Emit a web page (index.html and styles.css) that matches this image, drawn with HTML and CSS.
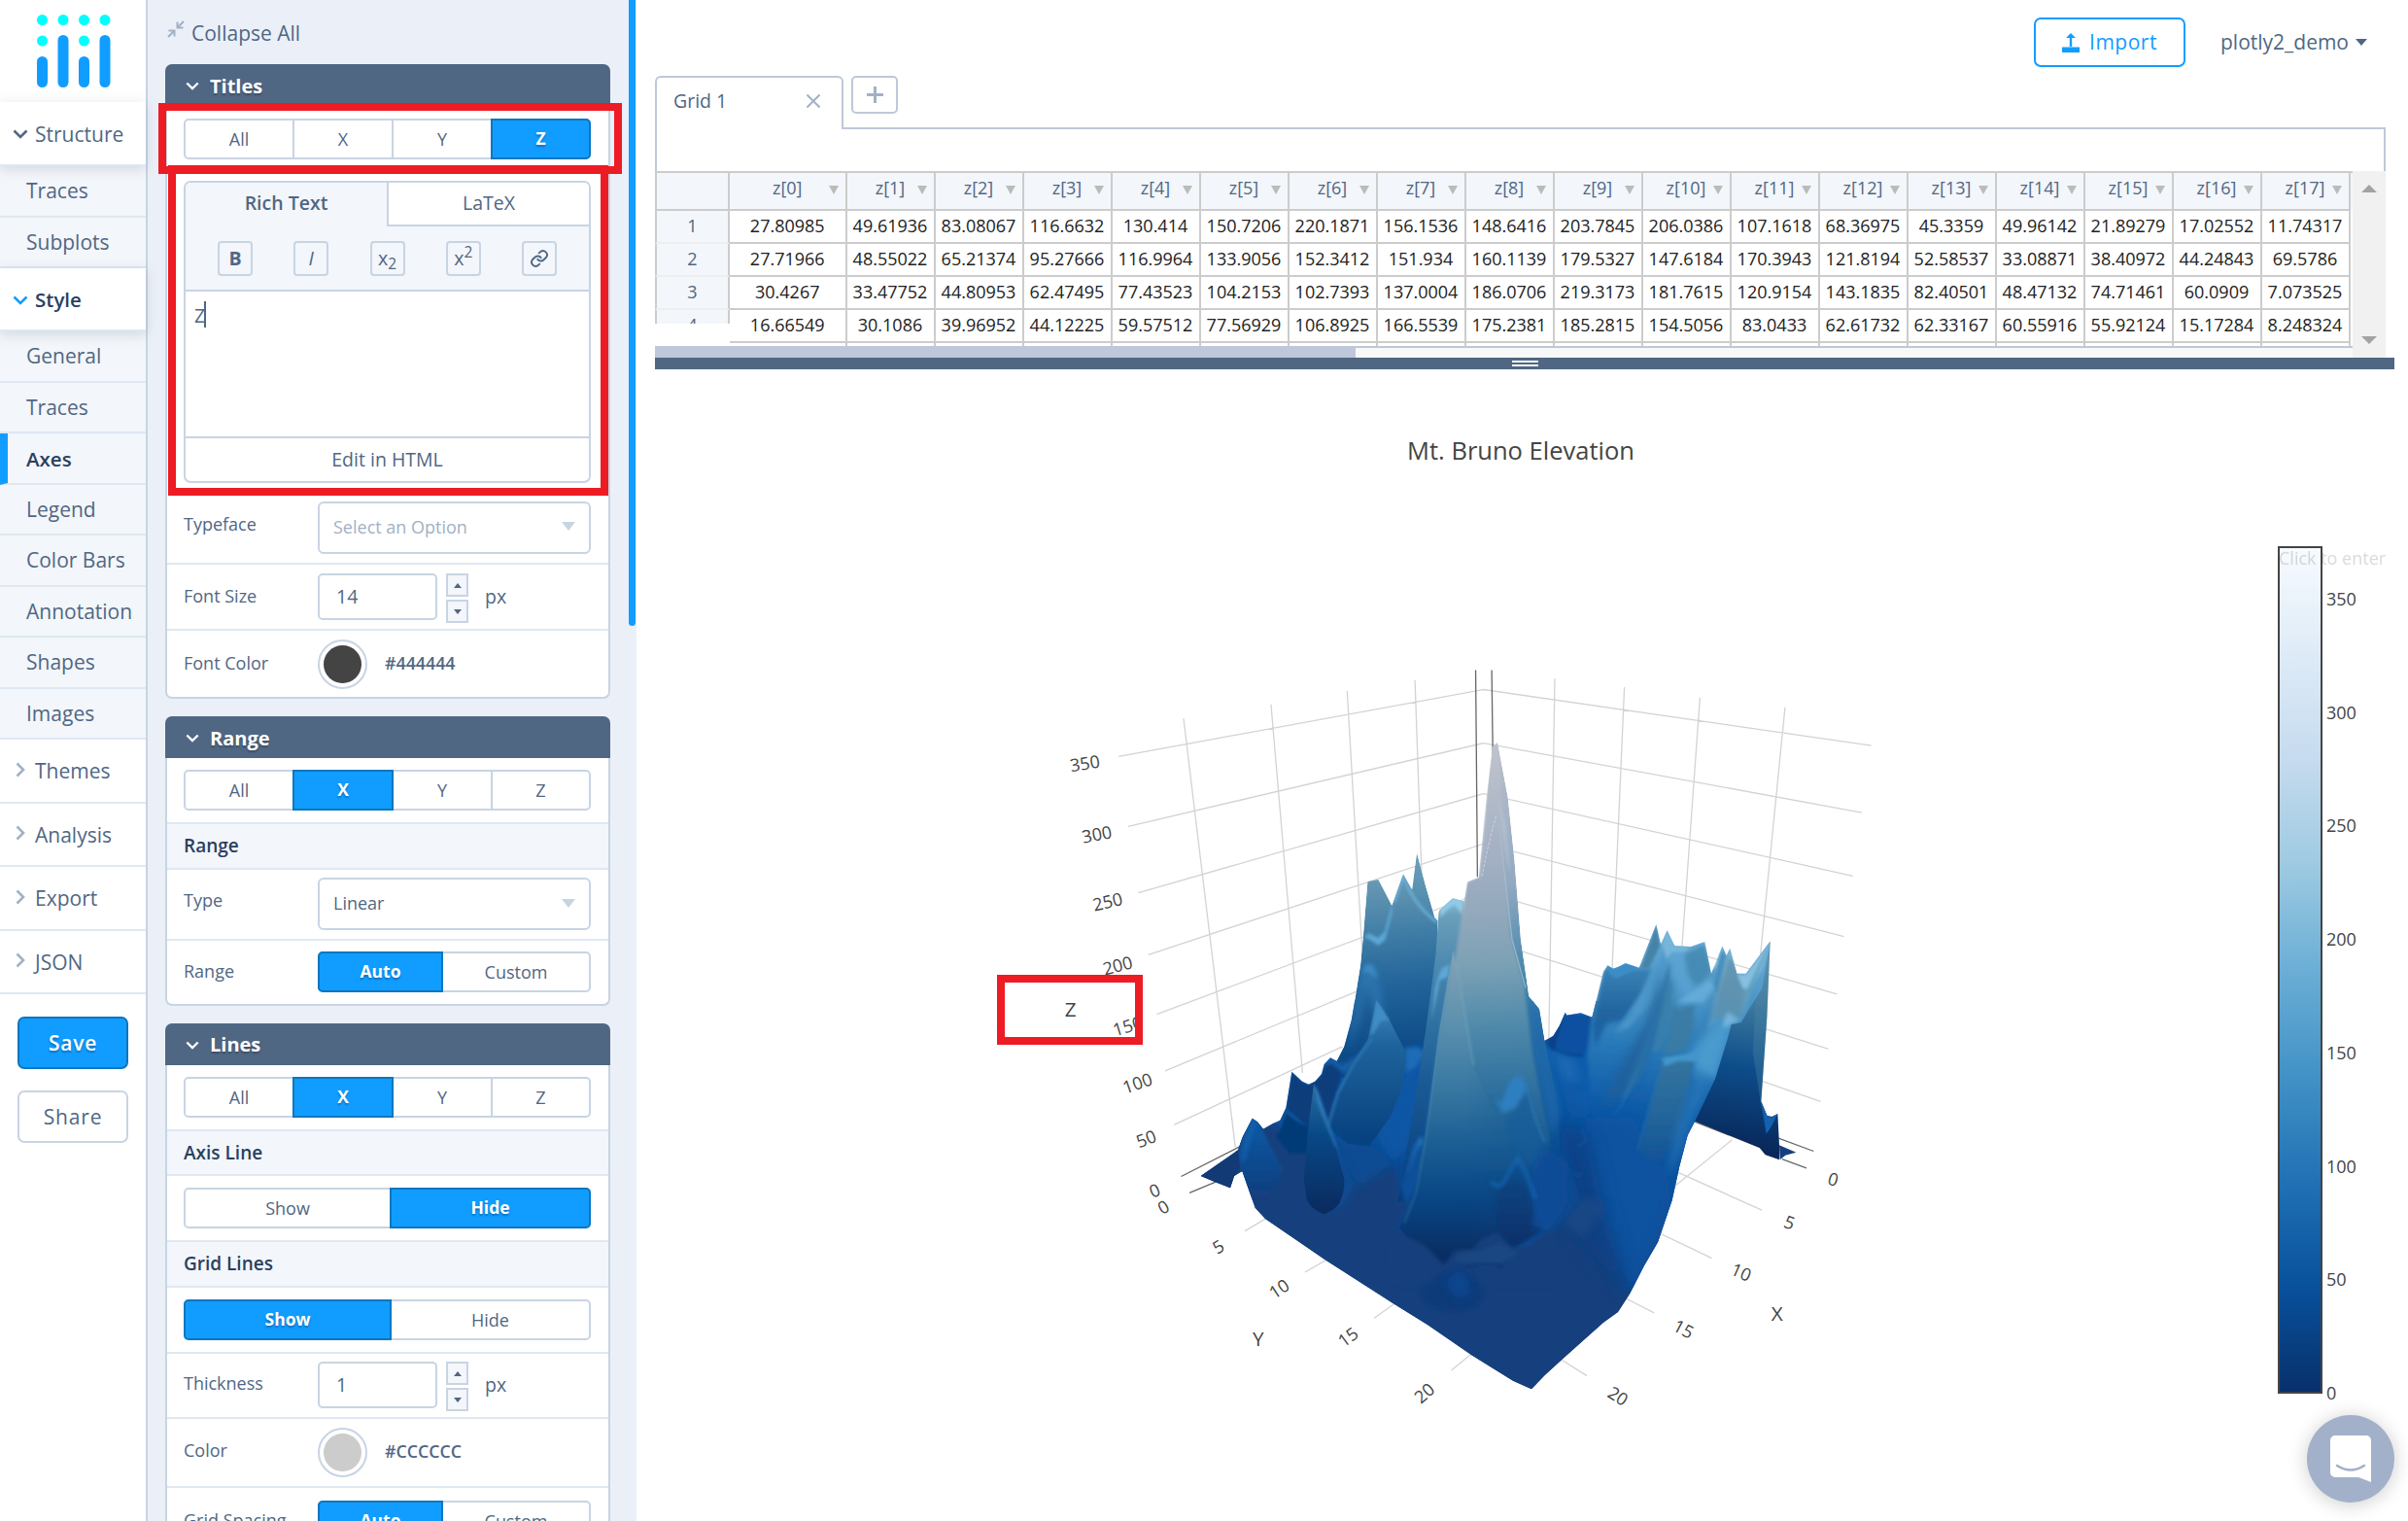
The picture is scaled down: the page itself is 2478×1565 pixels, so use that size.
FILE: index.html
```html
<!DOCTYPE html>
<html lang="en">
<head>
<meta charset="utf-8">
<title>Chart Studio</title>
<link rel="stylesheet" href="styles.css">
</head>
<body>
<div class="app">
  <nav class="sidebar">
    <div class="logo">
      <svg width="76" height="76" viewBox="0 0 76 76">
        <g fill="#0ff"><circle cx="5.5" cy="5.5" r="5.5"/><circle cx="27" cy="5.5" r="5.5"/><circle cx="48.500" cy="5.500" r="5.500"/><circle cx="70" cy="5.500" r="5.500"/><circle cx="5.500" cy="27" r="5.500"/><circle cx="48.500" cy="27" r="5.500"/></g>
        <g fill="#119dff"><rect x="0" y="43" width="11" height="32" rx="5.500"/><rect x="21.500" y="21" width="11" height="54" rx="5.500"/><rect x="43" y="43" width="11" height="32" rx="5.500"/><rect x="64.500" y="21" width="11" height="54" rx="5.500"/></g>
      </svg>
    </div>
    <div class="group open"><svg class="chev" viewBox="0 0 16 10"><path d="M1.500 1.500L8 8l6.500-6.500"/></svg>Structure</div>
    <div class="item">Traces</div>
    <div class="item">Subplots</div>
    <div class="group open active"><svg class="chev" viewBox="0 0 16 10"><path d="M1.500 1.500L8 8l6.500-6.500"/></svg>Style</div>
    <div class="item">General</div>
    <div class="item">Traces</div>
    <div class="item selected">Axes</div>
    <div class="item">Legend</div>
    <div class="item">Color Bars</div>
    <div class="item">Annotation</div>
    <div class="item">Shapes</div>
    <div class="item">Images</div>
    <div class="group"><svg class="chev side" viewBox="0 0 10 16"><path d="M1.500 1.500L8 8l-6.500 6.500"/></svg>Themes</div>
    <div class="group"><svg class="chev side" viewBox="0 0 10 16"><path d="M1.500 1.500L8 8l-6.500 6.500"/></svg>Analysis</div>
    <div class="group"><svg class="chev side" viewBox="0 0 10 16"><path d="M1.500 1.500L8 8l-6.500 6.500"/></svg>Export</div>
    <div class="group"><svg class="chev side" viewBox="0 0 10 16"><path d="M1.500 1.500L8 8l-6.500 6.500"/></svg>JSON</div>
    <button class="btn primary">Save</button>
    <button class="btn">Share</button>
  </nav>

  <aside class="panel">
    <div class="collapse">
      <svg width="18" height="18" viewBox="0 0 18 18" fill="none" stroke="#a2b1c6" stroke-width="2"><path d="M17 1l-6 6M10.500 1.500v6h6M1 17l6-6M1.500 10.500h6v6"/></svg>
      Collapse All
    </div>

    <section class="fold titles">
      <h2><svg class="chev" viewBox="0 0 16 10"><path d="M1.500 1.500L8 8l6.500-6.500"/></svg>Titles</h2>
      <div class="row seg-row plain"><div class="seg axes"><span>All</span><span>X</span><span>Y</span><span class="on">Z</span></div></div>
      <div class="editor-row">
        <div class="editor">
          <div class="tabs"><span class="current">Rich Text</span><span>LaTeX</span></div>
          <div class="tools">
            <span><b>B</b></span><span><i>I</i></span><span>x<sub>2</sub></span><span>x<sup>2</sup></span>
            <span><svg width="20" height="20" viewBox="0 0 24 24" fill="none" stroke="#506784" stroke-width="2.300" stroke-linecap="round"><path d="M10 13a5 5 0 0 0 7.500.5l3-3a5 5 0 0 0-7-7l-1.800 1.700M14 11a5 5 0 0 0-7.500-.5l-3 3a5 5 0 0 0 7 7l1.800-1.700"/></svg></span>
          </div>
          <div class="text">Z<span class="caret"></span></div>
          <div class="edit">Edit in HTML</div>
        </div>
      </div>
      <div class="row h75"><label>Typeface</label><div class="select hint">Select an Option<i></i></div></div>
      <div class="row h68"><label>Font Size</label><div class="num">14</div><div class="spin"><i class="up"></i><i class="down"></i></div><span class="unit">px</span></div>
      <div class="row h68"><label>Font Color</label><div class="swatch"><i class="dark"></i></div><span class="hex">#444444</span></div>
    </section>

    <section class="fold">
      <h2><svg class="chev" viewBox="0 0 16 10"><path d="M1.500 1.500L8 8l6.500-6.500"/></svg>Range</h2>
      <div class="row seg-row"><div class="seg axes"><span>All</span><span class="on">X</span><span>Y</span><span>Z</span></div></div>
      <div class="sub">Range</div>
      <div class="row h73"><label>Type</label><div class="select">Linear<i></i></div></div>
      <div class="row h65"><label>Range</label><div class="seg auto"><span class="on">Auto</span><span>Custom</span></div></div>
    </section>

    <section class="fold">
      <h2><svg class="chev" viewBox="0 0 16 10"><path d="M1.500 1.500L8 8l6.500-6.500"/></svg>Lines</h2>
      <div class="row seg-row"><div class="seg axes"><span>All</span><span class="on">X</span><span>Y</span><span>Z</span></div></div>
      <div class="sub">Axis Line</div>
      <div class="row seg-row"><div class="seg half"><span>Show</span><span class="on">Hide</span></div></div>
      <div class="sub">Grid Lines</div>
      <div class="row seg-row"><div class="seg half"><span class="on">Show</span><span>Hide</span></div></div>
      <div class="row h67"><label>Thickness</label><div class="num">1</div><div class="spin"><i class="up"></i><i class="down"></i></div><span class="unit">px</span></div>
      <div class="row h71"><label>Color</label><div class="swatch"><i class="light"></i></div><span class="hex">#CCCCCC</span></div>
      <div class="row h68"><label>Grid Spacing</label><div class="seg auto"><span class="on">Auto</span><span>Custom</span></div></div>
    </section>
    <div class="thumb"></div>
  </aside>

  <main class="work">
    <header class="top">
      <button class="import"><svg width="18" height="20" viewBox="0 0 18 20"><path fill="#119dff" d="M0 14.500h18V20H0zM7.800 14V5H4l5-5 5 5h-3.800v9z"/></svg>Import</button>
      <div class="user">plotly2_demo<i></i></div>
    </header>
    <div class="gridtabs">
      <div class="gtab"><span>Grid 1</span><svg width="16" height="16" viewBox="0 0 16 16" stroke="#a2b1c6" stroke-width="2"><path d="M1.500 1.500l13 13M14.500 1.500l-13 13"/></svg></div>
      <div class="line"><div class="plus"><svg width="17" height="17" viewBox="0 0 17 17" stroke="#a2b1c6" stroke-width="3"><path d="M8.500 0v17M0 8.500h17"/></svg></div></div>
    </div>
    <div class="formula"></div>
    <div class="sheet">
      <div class="rownums"><b></b><b>1</b><b>2</b><b>3</b><b>4</b></div>
      <div class="cells">
        <div class="r head"><span>z[0]</span><span>z[1]</span><span>z[2]</span><span>z[3]</span><span>z[4]</span><span>z[5]</span><span>z[6]</span><span>z[7]</span><span>z[8]</span><span>z[9]</span><span>z[10]</span><span>z[11]</span><span>z[12]</span><span>z[13]</span><span>z[14]</span><span>z[15]</span><span>z[16]</span><span>z[17]</span></div>
        <div class="r"><span>27.80985</span><span>49.61936</span><span>83.08067</span><span>116.6632</span><span>130.414</span><span>150.7206</span><span>220.1871</span><span>156.1536</span><span>148.6416</span><span>203.7845</span><span>206.0386</span><span>107.1618</span><span>68.36975</span><span>45.3359</span><span>49.96142</span><span>21.89279</span><span>17.02552</span><span>11.74317</span></div>
        <div class="r"><span>27.71966</span><span>48.55022</span><span>65.21374</span><span>95.27666</span><span>116.9964</span><span>133.9056</span><span>152.3412</span><span>151.934</span><span>160.1139</span><span>179.5327</span><span>147.6184</span><span>170.3943</span><span>121.8194</span><span>52.58537</span><span>33.08871</span><span>38.40972</span><span>44.24843</span><span>69.5786</span></div>
        <div class="r"><span>30.4267</span><span>33.47752</span><span>44.80953</span><span>62.47495</span><span>77.43523</span><span>104.2153</span><span>102.7393</span><span>137.0004</span><span>186.0706</span><span>219.3173</span><span>181.7615</span><span>120.9154</span><span>143.1835</span><span>82.40501</span><span>48.47132</span><span>74.71461</span><span>60.0909</span><span>7.073525</span></div>
        <div class="r"><span>16.66549</span><span>30.1086</span><span>39.96952</span><span>44.12225</span><span>59.57512</span><span>77.56929</span><span>106.8925</span><span>166.5539</span><span>175.2381</span><span>185.2815</span><span>154.5056</span><span>83.0433</span><span>62.61732</span><span>62.33167</span><span>60.55916</span><span>55.92124</span><span>15.17284</span><span>8.248324</span></div>
        <div class="r"><span></span><span></span><span></span><span></span><span></span><span></span><span></span><span></span><span></span><span></span><span></span><span></span><span></span><span></span><span></span><span></span><span></span><span></span></div>
      </div>
      <div class="vscroll"><i class="up"></i><i class="down"></i></div>
      <div class="hscroll"><i></i></div>
    </div>
    <div class="splitter"><i></i><i></i></div>

    <div class="plot">
      <div class="title">Mt. Bruno Elevation</div>
      <svg class="scene" width="960" height="820" viewBox="-600 -570 2880 2460">
        <defs>
          <filter id="s" x="-40%" y="-40%" width="180%" height="180%"><feGaussianBlur stdDeviation="4"/></filter>
          <filter id="n" x="-50%" y="-50%" width="200%" height="200%"><feGaussianBlur stdDeviation="7"/></filter>
          <filter id="m" x="-60%" y="-60%" width="220%" height="220%"><feGaussianBlur stdDeviation="13"/></filter>
          <filter id="l" x="-60%" y="-60%" width="220%" height="220%"><feGaussianBlur stdDeviation="28"/></filter>
          <linearGradient id="gFloor" gradientUnits="userSpaceOnUse" x1="0" y1="560" x2="0" y2="1300"><stop offset="0" stop-color="#1766b2"/><stop offset=".35" stop-color="#0b56a4"/><stop offset=".65" stop-color="#0a4a93"/><stop offset="1" stop-color="#17407d"/></linearGradient>
          <linearGradient id="gA" gradientUnits="userSpaceOnUse" x1="640" y1="160" x2="690" y2="700"><stop offset="0" stop-color="#6b9ab4"/><stop offset=".33" stop-color="#3f7da6"/><stop offset=".62" stop-color="#22649a"/><stop offset="1" stop-color="#0c4a87"/></linearGradient>
          <linearGradient id="gR" gradientUnits="userSpaceOnUse" x1="0" y1="82" x2="0" y2="300"><stop offset="0" stop-color="#6fa2bb"/><stop offset="1" stop-color="#4583a8"/></linearGradient>
          <linearGradient id="gB" gradientUnits="userSpaceOnUse" x1="0" y1="220" x2="0" y2="1150"><stop offset="0" stop-color="#8cc4e0"/><stop offset=".06" stop-color="#6b9fbb"/><stop offset=".3" stop-color="#3f7faa"/><stop offset=".6" stop-color="#1a5c97"/><stop offset="1" stop-color="#083c7b"/></linearGradient>
          <linearGradient id="gC" gradientUnits="userSpaceOnUse" x1="930" y1="-258" x2="1000" y2="1340"><stop offset="0" stop-color="#c0c5cd"/><stop offset=".2" stop-color="#a6b2c4"/><stop offset=".33" stop-color="#93a8bc"/><stop offset=".43" stop-color="#7ba1b5"/><stop offset=".55" stop-color="#4f89aa"/><stop offset=".68" stop-color="#2c6e9e"/><stop offset=".8" stop-color="#155790"/><stop offset=".9" stop-color="#074280"/><stop offset="1" stop-color="#0a2c60"/></linearGradient>
          <linearGradient id="gCs" gradientUnits="userSpaceOnUse" x1="0" y1="-258" x2="0" y2="980"><stop offset="0" stop-color="#b9c0cc"/><stop offset=".35" stop-color="#93a9c1"/><stop offset=".55" stop-color="#4d8cb0"/><stop offset=".75" stop-color="#286da2"/><stop offset="1" stop-color="#0a4e94"/></linearGradient>
          <linearGradient id="gD" gradientUnits="userSpaceOnUse" x1="0" y1="380" x2="0" y2="1340"><stop offset="0" stop-color="#87a5b6"/><stop offset=".25" stop-color="#5a8fae"/><stop offset=".45" stop-color="#3777a1"/><stop offset=".62" stop-color="#1c5f95"/><stop offset=".8" stop-color="#084685"/><stop offset="1" stop-color="#0a2c60"/></linearGradient>
          <linearGradient id="gFade" gradientUnits="userSpaceOnUse" x1="925" y1="0" x2="1040" y2="0"><stop offset="0" stop-color="#fff"/><stop offset="1" stop-color="#000"/></linearGradient>
          <mask id="fade" maskUnits="userSpaceOnUse" x="600" y="300" width="600" height="1200"><path fill="url(#gFade)" d="M600 300h600v1200H600z"/></mask>
          <linearGradient id="gL" gradientUnits="userSpaceOnUse" x1="0" y1="540" x2="0" y2="990"><stop offset="0" stop-color="#3f86ba"/><stop offset=".3" stop-color="#1f639c"/><stop offset="1" stop-color="#053f7d"/></linearGradient>
          <linearGradient id="gS" gradientUnits="userSpaceOnUse" x1="0" y1="790" x2="0" y2="1200"><stop offset="0" stop-color="#2a6ea2"/><stop offset=".4" stop-color="#084886"/><stop offset="1" stop-color="#0a2a5e"/></linearGradient>
          <linearGradient id="gT" gradientUnits="userSpaceOnUse" x1="0" y1="900" x2="0" y2="1150"><stop offset="0" stop-color="#0c5aa6"/><stop offset="1" stop-color="#123d7c"/></linearGradient>
          <linearGradient id="gW" gradientUnits="userSpaceOnUse" x1="1840" y1="380" x2="1760" y2="990"><stop offset="0" stop-color="#6f9fb8"/><stop offset=".3" stop-color="#3a769d"/><stop offset=".6" stop-color="#0d4d8a"/><stop offset="1" stop-color="#08285b"/></linearGradient>
          <linearGradient id="gE" gradientUnits="userSpaceOnUse" x1="1560" y1="300" x2="1440" y2="1240"><stop offset="0" stop-color="#6fb0da"/><stop offset=".22" stop-color="#4c96c6"/><stop offset=".42" stop-color="#2878b8"/><stop offset=".62" stop-color="#0d5aa8"/><stop offset="1" stop-color="#0a4a92"/></linearGradient>
          <linearGradient id="gEs" gradientUnits="userSpaceOnUse" x1="0" y1="430" x2="0" y2="720"><stop offset="0" stop-color="#3a83b6"/><stop offset=".5" stop-color="#22659f"/><stop offset="1" stop-color="#1260ab"/></linearGradient>
          <linearGradient id="gP" gradientUnits="userSpaceOnUse" x1="0" y1="700" x2="0" y2="1050"><stop offset="0" stop-color="#36779f"/><stop offset=".6" stop-color="#22649a"/><stop offset="1" stop-color="#0e5197"/></linearGradient>
          <linearGradient id="gQ" gradientUnits="userSpaceOnUse" x1="1760" y1="370" x2="1690" y2="640"><stop offset="0" stop-color="#83b9d8"/><stop offset=".4" stop-color="#6c9fbb"/><stop offset="1" stop-color="#4c93c3"/></linearGradient>
          <linearGradient id="gK" gradientUnits="userSpaceOnUse" x1="0" y1="1030" x2="0" y2="1290"><stop offset="0" stop-color="#0f569e"/><stop offset=".3" stop-color="#07437f"/><stop offset="1" stop-color="#08306a"/></linearGradient>
          <clipPath id="land"><path d="M107 1080L222 1000 236 960 266 902 282 913 300 935 330 918 352 908 370 870 388 758 420 788 440 797 460 788 480 765 488 735 507 715 527 725 550 680 572 600 586 520 600 430 608 340 622 172Q640 162 655 165L665 180 697 245 732 148 760 195 774 82 800 180 830 285 845 258Q865 238 885 222L920 232 930 172 965 158 988-80 1008-245 1023-258 1055-90 1075 100 1095 350 1120 525 1152 565 1168 663 1195 648 1215 615 1232 575 1237 584 1280 577 1315 590 1350 450 1363 430 1380 440 1400 433 1418 423 1460 437 1513 303 1527 365 1547 322 1570 370 1620 372 1663 357 1683 455 1717 370 1730 400 1741 377 1762 455 1790 455 1865 355 1840 500 1775 607 1745 612 1735 650 1695 780 1632 912 1610 955 1585 1050 1562 1155 1518 1285 1475 1358 1432 1443 1395 1500 1350 1532 1224 1645 1169 1695 1128 1738 1071 1712 943 1633 808 1540 704 1475 490 1338 306 1212 275 1178 235 1065 210 1080 198 1117 150 1098z"/></clipPath>
        </defs>

        <g class="gridlines" transform="matrix(1.8367 0 0 1.5306 -600 -570)">
          <path d="M247 232L860 97 1512 210M263 373L860 205 1496 345M280 507L860 307 1481 473M297 632L860 408 1466 595M311 752L860 505 1454 711M325 866L860 600 1440 822M340 975L623 817M1300 875L1427 928M356 155L443 1020M503 127L556 870M631 100L657 640M745 78L757 500M980 75L970 800M1097 92L1075 700M1224 113L1190 680M1367 133L1320 700M1278 1005L1170 1110M1180 1067L1328 1147M1145 1187L1244 1244M1090 1319L1147 1354M980 1440L1034 1481M500 1160L459 1189M604 1242L560 1272M717 1330L676 1365M847 1430L806 1470"/>
          <path class="axis" d="M847 58L850 475M874 58L876 240M352 1079L450 1019M366 1112L410 1090M1210 966L1325 1020M1345 997L1415 1028M1362 1044L1403 1062"/>
        </g>

        <!-- far wall -->
        <path fill="url(#gW)" d="M1740 600L1775 590 1865 355 1855 590 1837 850 1855 893 1870 897 1888 888 1893 985 1893 1030 1850 1015 1832 993 1635 912 1600 900z"/>
        <path fill="#4d86a4" opacity=".35" d="M1865 355L1855 590 1837 850 1850 950 1812 700 1822 480z"/>
        <path fill="#1262b0" d="M1837 850L1855 893 1870 900 1888 888 1870 925 1853 950z"/>
        <path fill="#173f7d" d="M1893 985L1945 1007 1912 1016 1895 1030z"/>

        <g clip-path="url(#land)">
          <path fill="url(#gFloor)" d="M90 540H1900V1760H90z"/>
          <path fill="#17407d" filter="url(#m)" d="M90 1000L300 900 420 960 520 1130 700 1040 760 1250 900 1340 1150 1260 1290 1100 1330 1220 1380 1330 1430 1430 1400 1560 1120 1780 90 1250z"/>
          <!-- valley -->
          <path fill="#0e5bab" filter="url(#l)" d="M1170 650L1330 590 1420 700 1300 900 1250 900z"/>
          <path fill="#1a68b4" filter="url(#m)" d="M1190 700L1260 720 1275 790 1230 780z"/>
          <path fill="#08418a" filter="url(#s)" d="M1165 665L1195 645 1235 575 1232 600 1210 680 1190 690z"/>
          <path fill="#0b50a0" filter="url(#s)" d="M1232 575L1315 588 1330 640 1305 695 1275 712 1225 695 1200 680z"/>
          <path fill="none" stroke="#083f87" stroke-width="5" filter="url(#s)" d="M1185 680Q1240 712 1290 708"/>

          <!-- right range -->
          <path fill="url(#gE)" filter="url(#n)" d="M1300 700L1315 590 1350 440 1365 415 1460 427 1513 285 1547 300 1570 355 1663 340 1690 445 1717 350 1741 360 1762 445 1865 335 1890 600 1755 622 1705 790 1642 922 1620 965 1572 1165 1528 1295 1450 1450 1400 1350 1350 1150 1320 950z"/>
          <path fill="#0a52a0" filter="url(#l)" d="M1290 900L1440 900 1550 1090 1560 1200 1440 1450 1330 1200z"/>
          <path fill="#0a3f84" opacity=".8" filter="url(#l)" d="M1230 900L1300 960 1350 1180 1430 1440 1300 1300 1200 1150z"/>
          <path fill="url(#gEs)" filter="url(#n)" d="M1315 620L1350 450 1362 435 1390 465 1440 440 1460 442 1500 440 1460 530 1410 600 1360 610 1325 680z"/>
          <path fill="#3b8cc6" filter="url(#s)" d="M1362 425L1385 440 1418 420 1462 437 1440 446 1410 455 1385 468 1370 455z"/>
          <path fill="#4583a8" filter="url(#s)" d="M1466 437L1513 303 1525 370 1490 440z"/>
          <path fill="#4d98cb" opacity=".85" filter="url(#n)" d="M1480 500L1540 380 1550 410 1500 540 1430 620 1385 640z"/>
          <path fill="#205f98" opacity=".7" filter="url(#m)" d="M1340 870L1400 740 1480 610 1510 510 1530 440 1530 540 1480 700 1430 820z"/>
          <path fill="#2b6ea3" opacity=".75" filter="url(#n)" d="M1400 850L1450 730 1510 570 1550 430 1560 420 1550 520 1520 640 1460 790z"/>
          <path fill="#5ba3d3" opacity=".9" filter="url(#m)" d="M1550 390L1590 375 1600 450 1640 520 1610 550 1585 490z"/>
          <path fill="#4386ae" opacity=".8" filter="url(#n)" d="M1600 395L1663 365 1685 450 1655 480 1630 490 1610 450z"/>
          <path fill="#77b5da" filter="url(#s)" d="M1530 360L1547 318 1572 370 1620 372 1600 388 1560 390 1545 410z"/>
          <path fill="#3a7fa8" opacity=".8" filter="url(#n)" d="M1500 700L1548 480 1565 475 1565 560 1530 690z"/>
          <path fill="#68aedb" opacity=".85" filter="url(#n)" d="M1575 545L1620 515 1675 475 1700 490 1660 545z"/>
          <path fill="#3a7ba4" opacity=".9" filter="url(#n)" d="M1535 708L1565 548 1580 565 1630 550 1630 620 1605 695z"/>
          <path fill="#347cb3" opacity=".7" filter="url(#m)" d="M1640 690L1680 570 1695 520 1700 560 1670 670z"/>
          <path fill="url(#gQ)" filter="url(#n)" d="M1670 630L1700 500 1741 370 1765 460 1800 490 1775 605 1730 590z"/>
          <path fill="#5b8fac" opacity=".7" filter="url(#s)" d="M1690 590L1738 405 1750 420 1785 500 1770 590z"/>
          <path fill="#3f86b5" opacity=".7" filter="url(#s)" d="M1690 490L1715 385 1728 400 1700 520z"/>
          <path fill="#86bfdf" filter="url(#s)" d="M1762 455L1790 458 1865 355 1840 440 1800 505 1780 500z"/>
          <path fill="#5f9fbe" opacity=".85" filter="url(#s)" d="M1865 355L1775 607 1795 500z"/>
          <path fill="#4a9acd" filter="url(#m)" d="M1620 700L1690 610 1740 590 1745 620 1700 780 1640 780 1630 740z"/>
          <path fill="#7cb9de" opacity=".85" filter="url(#n)" d="M1720 600L1735 572 1770 600 1745 612 1720 625z"/>
          <path fill="url(#gP)" filter="url(#n)" d="M1535 718L1600 715 1630 725 1590 930 1525 1045 1500 1030 1455 1000z"/>
          <path fill="#4395cb" filter="url(#s)" d="M1530 716L1610 702 1650 690 1640 725 1580 726 1538 742z"/>
          <path fill="#2a78b9" opacity=".7" filter="url(#m)" d="M1640 750L1690 770 1630 900 1590 1000 1545 1090 1570 950z"/>
          <g fill="none" stroke="#2a79bf" stroke-width="5" opacity=".45" filter="url(#s)"><path d="M1365 590Q1400 620 1440 575M1370 700L1400 680M1380 890Q1420 860 1460 740M1455 1000L1535 720M1400 870L1470 720 1530 540"/></g>
          <path fill="none" stroke="#15579f" stroke-width="6" opacity=".7" filter="url(#s)" d="M1255 805L1280 812M1250 850L1275 870M1280 930L1298 968 1270 990M1255 1072Q1270 1086 1288 1070"/>
          <path fill="#1e4a86" opacity=".8" filter="url(#m)" d="M1290 1140L1260 1170 1210 1220 1290 1270 1360 1170z"/>

          <!-- left rear massif -->
          <path fill="url(#gR)" d="M755 215L774 82 800 180 832 290 800 320z"/>
          <path fill="url(#gA)" d="M510 760L550 680 572 600 600 430 608 350 622 172 655 165 697 245 732 148 780 235 838 292 835 500 805 640 790 700 700 760 600 800z"/>
          <path fill="#5ba7d6" filter="url(#s)" d="M610 345L625 330 655 345 675 325 697 240 700 260 676 352 655 368 625 348z"/>
          <path fill="none" stroke="#6bb0da" stroke-width="8" filter="url(#s)" d="M705 235L732 152Q760 240 835 296"/>
          <path fill="#2d78b4" opacity=".8" filter="url(#m)" d="M600 470L620 430 645 440 665 520 670 600 640 560 620 480 595 600 560 700z"/>
          <path fill="#4090c9" opacity=".85" filter="url(#n)" d="M603 455L618 425 640 430 655 475 625 450z"/>
          <path fill="#083c7a" filter="url(#s)" d="M355 910L372 870 388 760 420 790 440 800 480 770 490 740 510 725 550 745 520 850 490 960z"/>
          <path fill="#1760a9" filter="url(#n)" d="M486 735L507 715 545 738 600 700 620 680 590 720 550 765 510 732z"/>
          <path fill="#0c56a5" filter="url(#m)" d="M650 960L740 780 760 690 800 680 780 900 740 1000 700 1040z"/>
          <path fill="#1f6cb6" filter="url(#n)" d="M735 685L775 680 800 700 770 745 740 760z"/>
          <path fill="url(#gL)" d="M500 930L515 860 530 820 570 740 622 660 632 620 650 538 690 600 736 690Q745 750 725 820L690 900 625 990 560 980z"/>
          <path fill="#3f8cc4" filter="url(#s)" d="M630 645L650 540 690 600 665 600 640 640z"/>
          <path fill="none" stroke="#2f79b8" stroke-width="6" filter="url(#s)" d="M500 925L530 825 575 740 635 655"/>
          <path fill="#0b4b92" filter="url(#m)" d="M500 940L560 980 640 990 700 1040 600 1110 560 1060z"/>
          <path fill="#063a77" filter="url(#s)" d="M340 960L370 875 440 930 440 1010 380 1010z"/>
          <path fill="#0f55a0" filter="url(#s)" d="M352 905L370 870 440 930 400 910 370 885 348 950z"/>
          <path fill="url(#gT)" filter="url(#s)" d="M222 1010L236 960 266 895 285 908 315 975 360 1060 320 1150 250 1150 230 1060z"/>
          <path fill="#1761ac" opacity=".8" filter="url(#n)" d="M240 970L264 905 280 915 265 960 245 1030 228 1040z"/>
          <path fill="#123a74" d="M107 1080L222 1003 228 1050 198 1117 150 1098z"/>
          <path fill="#0e4b92" filter="url(#m)" d="M500 1000L525 975 580 1110 540 1180 470 1150z"/>
          <path fill="url(#gS)" d="M425 1090L440 920 456 795 470 830 520 980 550 1090Q552 1130 535 1165L515 1185 488 1198Q450 1185 435 1155z"/>
          <path fill="#2a76b8" filter="url(#s)" d="M470 820L458 796 464 850 520 985 530 1000z"/>

          <!-- central massif -->
          <path fill="url(#gB)" d="M715 1160L760 900 800 640 832 400 842 262 885 222 920 232 915 500 860 1000 800 1150z"/>
          <path fill="#92cae6" filter="url(#s)" d="M845 258L885 222 922 232 918 275 890 242 865 260 848 282z"/>
          <path fill="#5ba7d8" filter="url(#s)" d="M838 470L850 440 876 425 872 465 845 475 820 600 830 500z"/>
          <path fill="#0c5099" filter="url(#n)" d="M725 1110L760 985 785 955 800 980 770 1130 740 1170z"/>
          <path fill="#2e7cc2" opacity=".8" filter="url(#n)" d="M765 1000L785 955 798 975 775 995 745 1080z"/>
          <path fill="url(#gCs)" d="M990-60L1008-245 1023-258 1055-90 1075 100 1095 350 1120 525 1152 565 1172 680 1210 860 1220 1100 1100 1100 1020 400z"/>
          <path fill="#1c68ad" opacity=".8" filter="url(#m)" d="M1120 530L1150 570 1180 720 1215 880 1190 960 1150 750z"/>
          <path fill="#0a4890" filter="url(#m)" d="M715 1240L790 1130 830 1290 1020 1290 1190 1130 1220 980 1280 1150 1160 1290 900 1360z"/>
          <path fill="url(#gC)" filter="url(#s)" d="M735 1240L770 1130 800 960 892 410 928 172 965 156 988-80 1003-260 1023-270 1033-150 1045 100 1062 330 1105 490 1130 700 1160 850 1185 960 1180 1060 1160 1250 1060 1310 857 1380 780 1320z"/>
          <path fill="#aab9cc" opacity=".7" filter="url(#s)" d="M966 155L990 0 1010-90 985 80z"/>
          <path fill="#b9c6d8" opacity=".6" filter="url(#s)" d="M1024-100L1050 0 1062 150 1050 100z"/>
          <path fill="none" stroke="#d5dde7" stroke-width="2.500" stroke-dasharray="9 5" d="M975 155Q1000 30 1020-35"/>
          <path fill="none" stroke="#a9bfd0" stroke-width="4" opacity=".7" d="M1028-5L1045 150 1068 350 1110 500"/>
          <g mask="url(#fade)"><path fill="url(#gD)" d="M720 1240L770 1130 800 960 840 650 868 480 886 385 900 450 925 590 952 750 1060 1000 1060 1300 930 1330 857 1370 780 1320z"/></g>
          <path fill="none" stroke="#7fb0cc" stroke-width="4" opacity=".6" filter="url(#s)" d="M887 388L905 470 930 620 950 740"/>
          <path fill="none" stroke="#4c8fbd" stroke-width="4" opacity=".6" filter="url(#s)" d="M884 392L842 650 802 960 772 1130 735 1225"/>
          <path fill="#17407d" filter="url(#n)" d="M660 1220L735 1262 800 1295 857 1355 895 1305 925 1322 975 1275 1030 1250 1060 1295 1120 1300 1200 1230 1220 1420 700 1420z"/>
          <path fill="#2f7fc0" filter="url(#n)" d="M1015 840L1035 855 1060 790 1085 768 1108 785 1115 825 1100 835 1080 870 1040 885z"/>
          <path fill="#175c99" opacity=".6" filter="url(#n)" d="M1050 900L1085 870 1112 815 1140 930 1170 1000 1170 1080 1120 1040 1080 1010z"/>
          <path fill="none" stroke="#2f7cba" stroke-width="6" opacity=".75" filter="url(#s)" d="M1110 795L1140 900 1168 975"/>
          <path fill="#0b4c97" filter="url(#m)" d="M1130 1060L1170 990 1240 1040 1240 1160 1180 1250 1130 1230z"/>
          <path fill="url(#gK)" filter="url(#n)" d="M1015 1150L1040 1100 1083 1025 1110 1090 1132 1200 1110 1275 1075 1290 1030 1260z"/>
          <path fill="none" stroke="#1a69b6" stroke-width="9" opacity=".9" filter="url(#n)" d="M1003 1095Q1025 1125 1042 1098T1085 1022Q1110 1060 1140 1150"/>
          <path fill="#1d4883" opacity=".8" filter="url(#n)" d="M890 1345L915 1305 960 1315 1030 1285 1090 1320 1010 1360z"/>

          <!-- front knoll -->
          <path fill="#083a7a" filter="url(#n)" d="M785 1440L840 1385 905 1365 950 1395 985 1445 960 1485 910 1500 850 1495 800 1475z"/>
          <path fill="#0b4a93" opacity=".8" filter="url(#m)" d="M860 1410L900 1370 930 1390 940 1440 900 1460z"/>
          <path fill="none" stroke="#0c366f" stroke-width="6" filter="url(#s)" d="M925 1362Q990 1340 1040 1362"/>
        </g>

        <g class="ticks">
          <text transform="translate(-251 -195) rotate(-9)">350</text><text transform="translate(-214 24) rotate(-11)">300</text><text transform="translate(-181 232) rotate(-13)">250</text><text transform="translate(-150 429) rotate(-15)">200</text><text transform="translate(-119 616) rotate(-17)">150</text><text transform="translate(-89 792) rotate(-19)">100</text><text transform="translate(-62 964) rotate(-21)">50</text><text transform="translate(-36 1124) rotate(-23)">0</text>
          <text transform="translate(-9 1175) rotate(-30)">0</text><text transform="translate(160 1297) rotate(-30)">5</text><text transform="translate(348 1427) rotate(-33)">10</text><text transform="translate(561 1576) rotate(-36)">15</text><text transform="translate(796 1749) rotate(-41)">20</text>
          <text transform="translate(2060 1089) rotate(16)">0</text><text transform="translate(1925 1222) rotate(20)">5</text><text transform="translate(1776 1376) rotate(24)">10</text><text transform="translate(1598 1551) rotate(28)">15</text><text transform="translate(1396 1758) rotate(32)">20</text>
          <g class="names"><text x="-295" y="564">Z</text><text x="284" y="1582">Y</text><text x="1886" y="1502">X</text></g>
        </g>
      </svg>
      <div class="mark z"></div>
      <div class="colorbar">
        <div class="ramp"></div>
        <em>Click to enter</em>
        <div class="levels"><span>350</span><span>300</span><span>250</span><span>200</span><span>150</span><span>100</span><span>50</span><span>0</span></div>
      </div>
    </div>
  </main>
  <div class="mark one"></div>
  <div class="mark two"></div>
  <div class="chat"><svg width="42" height="48" viewBox="0 0 42 48"><path fill="#fff" d="M5 0h32a5 5 0 0 1 5 5v43l-13-5H5a5 5 0 0 1-5-5V5a5 5 0 0 1 5-5z"/><path fill="none" stroke="#a2b1c9" stroke-width="2.500" stroke-linecap="round" d="M7 31q14 9 28 0"/></svg></div>
</div>
</body>
</html>
```

FILE: styles.css
```css
* { box-sizing: border-box; }
body { margin: 0; overflow: hidden; background: #fff; color: #506784; font: 18px/1 "Open Sans", "Noto Sans", sans-serif; }
i { font-style: normal; }
.app { display: flex; position: relative; width: 2478px; height: 1565px; overflow: hidden; }

/* sidebar */
.sidebar { width: 152px; flex: none; border-right: 2px solid #c8d4e3; font-size: 21px; display: flex; flex-direction: column; }
.logo { height: 105px; padding: 15px 0 0 38px; flex: none; }
.logo svg { display: block; }
.group { height: 65.5px; flex: none; display: flex; align-items: center; gap: 7px; padding: 2px 0 0 13px; border-bottom: 2px solid #dfe8f3; position: relative; background: #fff; }
.group.open { height: 66px; box-shadow: 0 3px 12px rgba(80,103,132,.22); z-index: 1; }
.group.active { color: #2a3f5f; font-weight: 600; height: 65px; font-size: 20.500px; }
.chev { width: 16px; height: 10px; fill: none; stroke: #506784; stroke-width: 2.600; }
.active .chev { stroke: #119dff; }
.chev.side { width: 10px; height: 16px; margin: -4px 3px 0 3px; stroke: #a2b1c6; }
.item { height: 52.5px; flex: none; display: flex; align-items: center; padding: 1px 0 0 27px; background: #f3f6fa; border-bottom: 2px solid #dfe8f3; }
.item.selected { color: #2a3f5f; font-weight: 600; font-size: 20.500px; border-left: 8px solid #119dff; padding-left: 19px; }
.btn { font: 500 21px/1 "Open Sans", sans-serif; letter-spacing: .8px; width: 114px; height: 54px; margin: 22px 0 0 18px; border: 2px solid #c8d4e3; border-radius: 7px; background: #fff; color: #506784; padding: 0; flex: none; }
.btn.primary { background: #119dff; border-color: #0d76bf; color: #fff; font-weight: 600; margin-top: 23px; text-shadow: 0 2px 2px rgba(0,50,100,.4); }

/* panel */
.panel { width: 503px; flex: none; background: #ebf0f8; padding-left: 18px; position: relative; }
.collapse { height: 66px; font-size: 21px; padding: 21px 0 0 3px; display: flex; gap: 7px; line-height: 27px; }
.collapse svg { margin-left: -1px; }
.fold { width: 458px; border: 2px solid #c8d4e3; border-top: 0; border-radius: 7px; background: #fff; margin-bottom: 18px; }
.fold h2 { margin: 0 -2px; height: 43px; background: #506784; border-radius: 7px 7px 0 0; color: #fff; font-size: 20px; font-weight: 700; display: flex; align-items: center; gap: 11px; padding: 2px 0 0 21px; text-shadow: 0 2px 2px rgba(0,0,0,.25); }
.fold h2 .chev { width: 14px; height: 9px; stroke: #fff; }
.row { border-bottom: 2px solid #dfe8f3; display: flex; align-items: center; padding: 0 17px; }
.row:last-child { border-bottom: 0; }
.row label { width: 138px; flex: none; padding-bottom: 4px; }
.h75 label, .h73 label { padding-bottom: 8px; }
.h68 label, .h65 label { padding-bottom: 2px; }
.seg-row { height: 68px; }
.seg-row.plain { border: 0; height: 70px; padding-bottom: 3px; }
.h75 { height: 75px; } .h73 { height: 73px; } .h71 { height: 71px; } .h68 { height: 68px; } .h67 { height: 67px; } .h65 { height: 65px; }
.seg { display: grid; height: 42px; width: 419px; border: 2px solid #c8d4e3; border-radius: 5px; }
.seg.axes { grid-template-columns: 112px 102px 102px 99px; }
.seg.half { grid-template-columns: 212px 203px; }
.seg.auto { width: 281px; grid-template-columns: 127px 150px; }
.seg span { display: flex; align-items: center; justify-content: center; border-right: 2px solid #c8d4e3; }
.seg span:last-child { border-right: 0; }
.seg .on { margin: -2px 0 -2px -2px; background: #119dff; border: 2px solid #0d76bf; color: #fff; font-size: 17.500px; font-weight: 700; text-shadow: 0 2px 2px rgba(0,50,100,.4); }
.seg .on:last-child { margin-right: -2px; border: 2px solid #0d76bf; border-radius: 0 5px 5px 0; }
.seg .on:first-child { border-radius: 5px 0 0 5px; }
.sub { height: 46.500px; background: #f3f6fa; border-bottom: 2px solid #dfe8f3; color: #2a3f5f; font-size: 19px; font-weight: 600; display: flex; align-items: center; padding: 1px 0 0 17px; }
.editor-row { height: 327px; padding: 7px 17px 0; }
.editor { height: 311px; width: 419px; border: 2px solid #c8d4e3; border-radius: 7px; font-size: 19.500px; display: flex; flex-direction: column; overflow: hidden; }
.tabs { display: flex; height: 45px; background: #f3f6fa; flex: none; }
.tabs span { flex: 1; display: flex; align-items: center; justify-content: center; background: #fff; border-left: 2px solid #c8d4e3; border-bottom: 2px solid #c8d4e3; padding-bottom: 2px; }
.tabs .current { background: none; border: 0; font-weight: 600; padding-bottom: 4px; flex: 0 0 207px; }
.tools { height: 67px; flex: none; background: #f3f6fa; border-bottom: 2px solid #c8d4e3; display: flex; justify-content: space-between; align-items: center; padding: 0 33px 0 33px; }
.tools span { width: 36px; height: 36px; border: 2px solid #c8d4e3; border-radius: 4px; display: flex; align-items: center; justify-content: center; }
.tools i { font-style: italic; }
.tools sub, .tools sup { font-size: 15.500px; position: relative; top: 6px; }
.tools sup { top: -6px; }
.text { flex: 1; padding: 10px 0 0 9px; display: flex; line-height: 30px; }
.caret { width: 2px; height: 27px; margin-left: -1px; background: #506784; }
.edit { height: 46px; border-top: 2px solid #c8d4e3; display: flex; align-items: center; justify-content: center; }
.select { width: 281px; height: 54px; border: 2px solid #c8d4e3; border-radius: 6px; display: flex; align-items: center; justify-content: space-between; padding: 0 14px 2px; }
.select.hint { color: #a2b1c6; }
.select i, .user i { border: 7px solid transparent; border-top: 9px solid #c8d4e3; border-bottom: 0; }
.num { width: 123px; height: 48px; border: 2px solid #c8d4e3; border-radius: 5px; font-size: 19.500px; display: flex; align-items: center; padding-left: 17px; }
.spin { margin: 3px 0 0 9px; display: flex; flex-direction: column; gap: 3px; }
.spin i { width: 23px; height: 24px; border: 2px solid #c8d4e3; background: #f3f6fa; display: flex; align-items: center; justify-content: center; }
.spin i::after { content: ""; border: 4px solid transparent; border-bottom: 5px solid #506784; border-top: 0; }
.spin .down::after { border-top: 5px solid #506784; border-bottom: 0; }
.unit { font-size: 19.500px; margin-left: 17px; }
.swatch { width: 51px; height: 51px; border: 2px solid #c8d4e3; border-radius: 50%; padding: 4px; }
.swatch i { display: block; height: 39px; width: 39px; border-radius: 50%; }
.dark { background: #444; } .light { background: #ccc; }
.hex { margin-left: 18px; font-weight: 600; font-size: 17.800px; }
.thumb { position: absolute; right: 1px; top: -7px; width: 7px; height: 651px; background: #119dff; border-radius: 4px; }

/* workspace */
.work { flex: 1; padding-left: 19px; }
.top { height: 78px; display: flex; justify-content: flex-end; align-items: flex-start; padding: 18px 42px 0 0; font-size: 21px; }
.import { font: 21px/1 "Open Sans", sans-serif; letter-spacing: .5px; color: #119dff; width: 156px; height: 51px; border: 2px solid #119dff; border-radius: 7px; background: #fff; display: flex; align-items: center; justify-content: center; gap: 10px; padding: 0; }
.user { display: flex; align-items: center; gap: 7px; height: 51px; margin-left: 36px; }
.user i { border-top-color: #506784; border-width: 7px 6px 0; }
.gridtabs { display: flex; height: 55px; width: 1781px; }
.gtab { width: 194px; border: 2px solid #bec8d9; border-bottom: 0; border-radius: 6px 6px 0 0; display: flex; align-items: center; justify-content: space-between; padding: 0 21px 6px 17px; font-size: 19.500px; }
.line { flex: 1; border-bottom: 2px solid #bec8d9; padding-left: 8px; }
.plus { width: 48px; height: 39px; border: 2px solid #bec8d9; border-radius: 5px; display: flex; align-items: center; justify-content: center; }
.formula { height: 43px; width: 1781px; border-left: 2px solid #bec8d9; border-right: 2px solid #bec8d9; }
.sheet { width: 1781px; height: 192px; display: grid; grid-template-columns: 77px 1670px 34px; grid-template-rows: 182px 10px; }
.rownums { height: 157px; overflow: hidden; border-top: 2px solid #ccc; }
.rownums b { display: flex; height: 34px; align-items: center; justify-content: center; font-weight: 400; background: #f3f6fa; border: solid #ccc; border-width: 0 2px; border-bottom: 2px solid #eee; padding-bottom: 3px; }
.rownums b:first-child { height: 39px; border-bottom-color: #ccc; }
.cells { border-top: 2px solid #ccc; border-bottom: 2px solid #bec8d9; overflow: hidden; color: #222; }
.r { display: grid; grid-template-columns: 120.500px repeat(17, 91px); height: 34px; }
.r span { border-right: 2px solid #ccc; border-bottom: 2px solid #ccc; display: flex; align-items: center; justify-content: center; padding-bottom: 3px; }
.head { height: 39px; color: #506784; background: #f3f6fa; }
.head span { position: relative; padding-bottom: 8px; }
.head span::after { content: ""; position: absolute; right: 7px; top: 13px; border: 5px solid transparent; border-top: 9px solid #bbb; border-bottom: 0; }
.vscroll { grid-column: 3; grid-row: 1 / 3; background: #f1f1f1; display: flex; flex-direction: column; align-items: center; justify-content: space-between; padding: 14px 0 14px; }
.vscroll i { border: 8px solid transparent; border-bottom: 8px solid #a3a3a3; border-top: 0; }
.vscroll .down { border-top: 8px solid #a3a3a3; border-bottom: 0; }
.hscroll { grid-column: 1 / 3; grid-row: 2; background: #f8f8f8; }
.hscroll i { display: block; width: 721px; height: 12px; margin-top: -2px; background: #bec8da; }
.splitter { width: 1790px; height: 12px; background: #506784; display: flex; flex-direction: column; align-items: center; justify-content: center; gap: 2px; }
.splitter i { width: 27px; height: 2px; background: #fff; }

/* plot; the scene is a free canvas */
.plot { position: relative; height: 1185px; }
.title { padding-top: 71px; width: 1782px; text-align: center; font-size: 25.500px; color: #444; }
.scene { position: absolute; left: 326px; top: 280px; }
.gridlines path { fill: none; stroke: #d3d3d3; stroke-width: 1.300; vector-effect: non-scaling-stroke; }
.gridlines .axis { stroke: #666; }
.ticks text { font-size: 54px; fill: #444; text-anchor: middle; dominant-baseline: central; }
.names text { font-size: 62px; }
.mark { position: absolute; border: 8px solid #ed1c24; }
.mark.z { left: 352px; top: 623px; width: 150px; height: 72px; }
.mark.one { left: 163px; top: 106px; width: 477px; height: 73px; }
.mark.two { left: 173px; top: 170px; width: 453px; height: 340px; }
.colorbar { position: absolute; left: 1670px; top: 182px; display: flex; color: #444; }
.ramp { width: 46px; height: 872px; border: 2px solid #444; background: linear-gradient(#f7fbff, #deebf7 12.500%, #c6dbef 25%, #9ecae1 37.500%, #6baed6 50%, #4292c6 62.500%, #2171b5 75%, #08519c 87.500%, #08306b); }
.colorbar em { position: absolute; left: 1px; top: 3px; white-space: nowrap; font-style: normal; color: #444; opacity: .2; }
.levels { display: flex; flex-direction: column; justify-content: space-between; height: 835px; margin: 45px 0 0 4px; }
.chat { position: absolute; left: 2374px; top: 1456px; width: 90px; height: 90px; border-radius: 50%; background: #a2b1c9; display: flex; align-items: center; justify-content: center; box-shadow: 0 2px 20px rgba(0,0,0,.2); }
```
